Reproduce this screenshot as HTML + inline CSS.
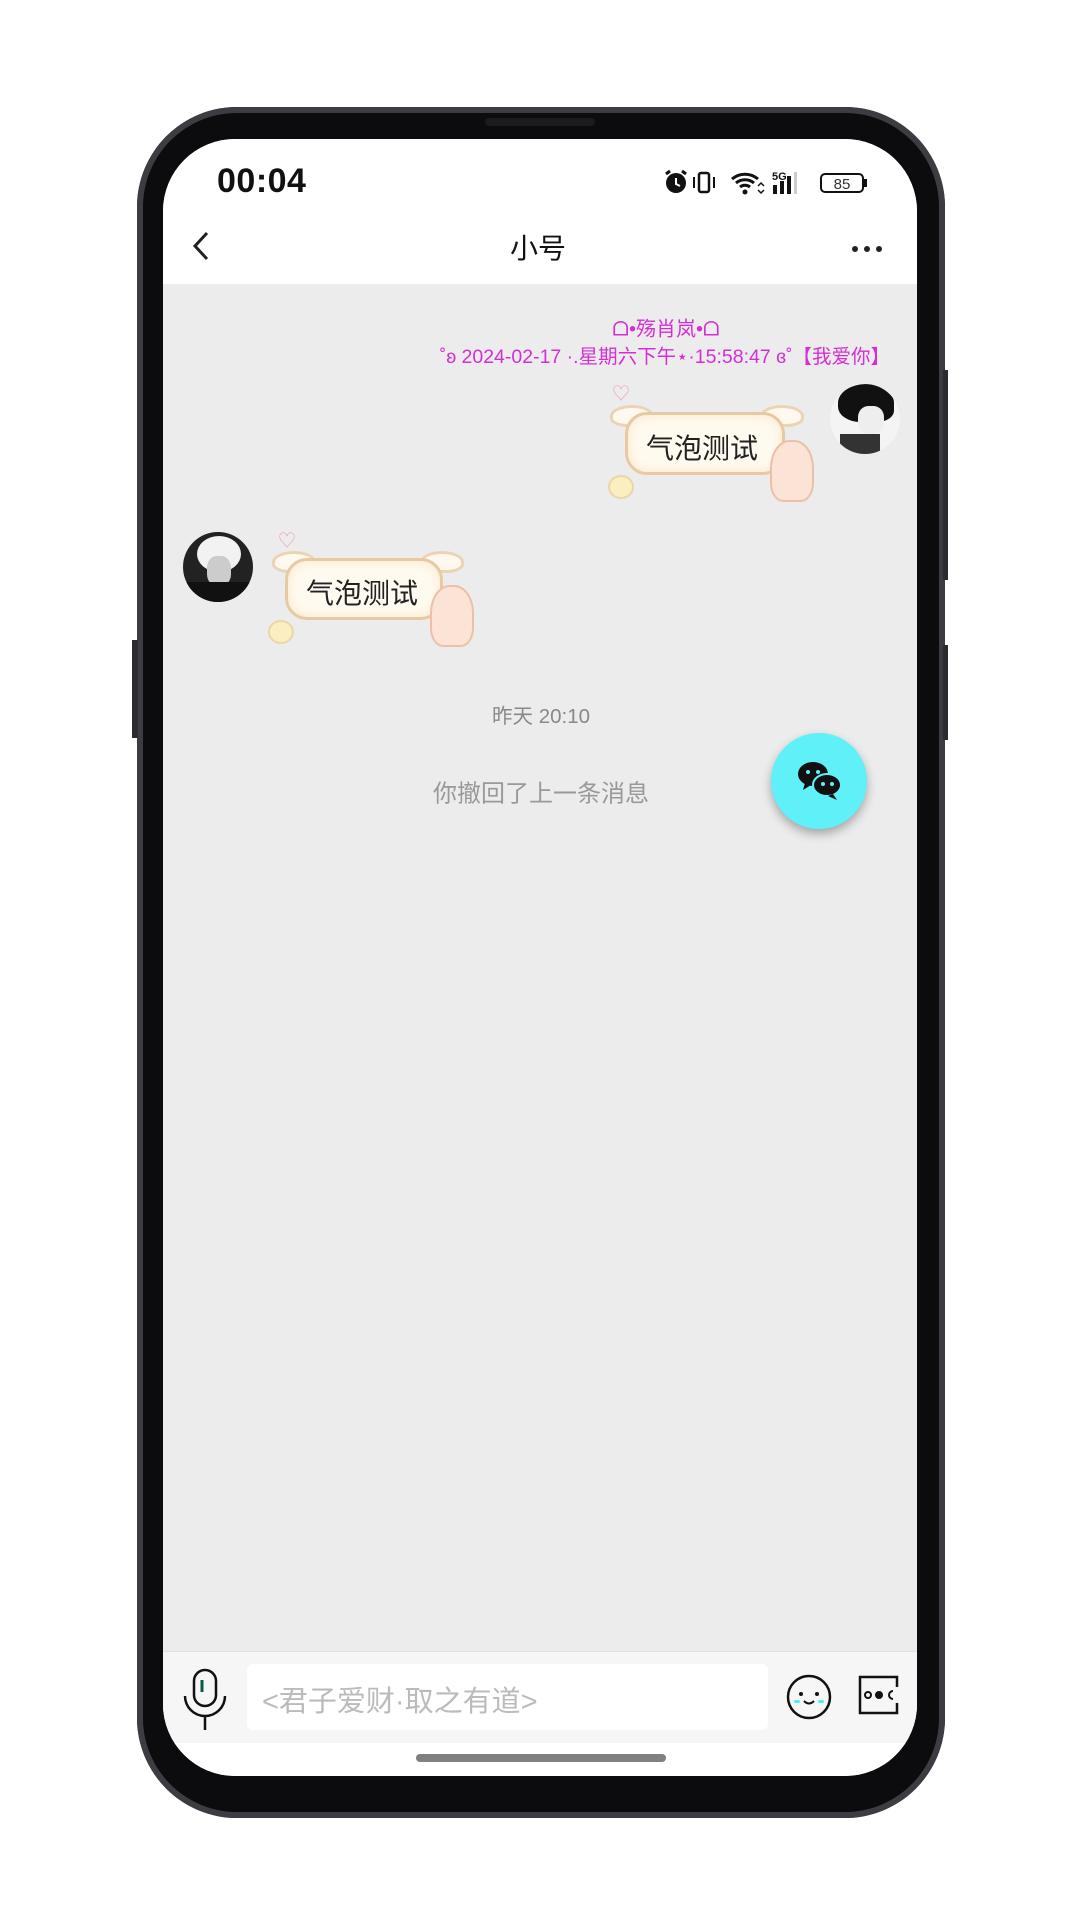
<!DOCTYPE html>
<html><head><meta charset="utf-8">
<style>
*{margin:0;padding:0;box-sizing:border-box}
body{width:1080px;height:1918px;background:#fff;position:relative;overflow:hidden;font-family:"Liberation Sans","Noto Sans CJK SC",sans-serif}
.abs{position:absolute}
.phone{left:137px;top:107px;width:808px;height:1711px;background:#0c0c0e;border-radius:100px;box-shadow:inset 0 0 0 6px #3c3c42}
.screen{left:163px;top:139px;width:754px;height:1637px;background:#ececec;border-radius:72px;overflow:hidden}
.c{transform:translate(-50%,-50%);white-space:nowrap}
.bub{background:#fffaf0;border:3px solid #e8c9a4;border-radius:22px;box-shadow:inset 0 0 12px #f8e6c8}
.wing{width:44px;height:22px;border:3px solid #ecd3b4;border-radius:50% 50% 40% 40%;background:#fff8ee}
.av{border-radius:50%;overflow:hidden}
</style></head><body>
<div class="abs phone"></div>
<div class="abs" style="left:485px;top:118px;width:110px;height:8px;background:#1c1c20;border-radius:4px"></div>
<div class="abs" style="left:943px;top:370px;width:5px;height:210px;background:#2b2b30"></div>
<div class="abs" style="left:943px;top:645px;width:5px;height:95px;background:#2b2b30"></div>
<div class="abs" style="left:132px;top:640px;width:6px;height:98px;background:#2b2b30"></div>
<div class="abs screen">
  <div class="abs" style="left:0;top:0;width:754px;height:145px;background:#fff"></div>
  <div class="abs" style="left:0;top:1512px;width:754px;height:125px;background:#fff"></div>
  <div class="abs" style="left:0;top:1512px;width:754px;height:92px;background:#f6f6f6;border-top:1px solid #e2e2e2"></div>
</div>
<div class="abs" style="left:217px;top:162px;font-size:34px;color:#111;font-weight:bold;letter-spacing:0.5px">00:04</div>
<svg class="abs" style="left:660px;top:168px" width="215" height="30" viewBox="0 0 215 30">
  <circle cx="16" cy="15" r="10" fill="#111"/><path d="M6 6l4-3M26 6l-4-3" stroke="#111" stroke-width="3"/><path d="M16 10v6l4 2" stroke="#fff" stroke-width="2" fill="none"/>
  <rect x="39" y="5" width="10" height="19" rx="2" fill="none" stroke="#111" stroke-width="2.5"/><path d="M34 9v11M54 9v11" stroke="#111" stroke-width="2"/>
  <path d="M72 11a20 20 0 0 1 26 0M76 15a14 14 0 0 1 18 0M80 19a8 8 0 0 1 10 0" stroke="#111" stroke-width="3" fill="none"/><circle cx="85" cy="24" r="2.5" fill="#111"/><path d="M98 18l3-3 3 3M98 22l3 3 3-3" stroke="#111" stroke-width="1.5" fill="none"/>
  <text x="112" y="12" font-size="11" font-weight="bold" fill="#111" font-family="Liberation Sans">5G</text>
  <rect x="113" y="17" width="4" height="9" fill="#111"/><rect x="120" y="13" width="4" height="13" fill="#111"/><rect x="127" y="8" width="4" height="18" fill="#111"/><rect x="134" y="4" width="3" height="22" fill="#ccc"/>
  <rect x="161" y="6" width="42" height="18" rx="4" fill="none" stroke="#111" stroke-width="2"/><rect x="204" y="11" width="3" height="8" fill="#111"/>
  <text x="182" y="21" font-size="15" fill="#333" text-anchor="middle" font-family="Liberation Sans">85</text>
</svg>
<svg class="abs" style="left:190px;top:230px" width="22" height="32"><path d="M17 3L5 16l12 13" stroke="#222" stroke-width="3" fill="none"/></svg>
<div class="abs c" style="left:538px;top:247px;font-size:28px;color:#111">小号</div>
<div class="abs" style="left:852px;top:246px;width:6px;height:6px;border-radius:50%;background:#222;box-shadow:12px 0 #222,24px 0 #222"></div>
<div class="abs c" style="left:666px;top:327px;font-size:20px;color:#d62ed6">ᗝ•殇肖岚•ᗝ</div>
<div class="abs" style="right:190px;top:340px;font-size:19.5px;color:#d62ed6;white-space:nowrap">˚ʚ 2024-02-17 ·.星期六下午⋆·15:58:47 ɞ˚【我爱你】</div>
<div class="abs" style="left:612px;top:380px;color:#f3a0c4;font-size:18px">♡</div>
<div class="abs wing" style="left:610px;top:405px"></div><div class="abs wing" style="left:760px;top:405px"></div>
<div class="abs bub" style="left:625px;top:412px;width:160px;height:63px"></div>
<div class="abs c" style="left:702px;top:447px;font-size:28px;color:#222">气泡测试</div>
<div class="abs" style="left:608px;top:475px;width:26px;height:24px;border-radius:50%;background:#fbeec0;border:2px solid #e9d7a8"></div>
<div class="abs" style="left:770px;top:440px;width:44px;height:62px;border-radius:45% 45% 30% 30%;background:#fbe3d5;border:2px solid #ecc0a8"></div>
<div class="abs av" style="left:830px;top:384px;width:70px;height:70px;background:#f4f4f4">
  <div class="abs" style="left:8px;top:0;width:56px;height:38px;background:#111;border-radius:50% 50% 30% 40%"></div>
  <div class="abs" style="left:28px;top:22px;width:26px;height:28px;background:#eee;border-radius:40%"></div>
  <div class="abs" style="left:10px;top:50px;width:40px;height:22px;background:#333"></div>
</div>
<div class="abs" style="left:278px;top:527px;color:#f3a0c4;font-size:18px">♡</div>
<div class="abs wing" style="left:272px;top:551px"></div><div class="abs wing" style="left:420px;top:551px"></div>
<div class="abs bub" style="left:285px;top:558px;width:158px;height:62px"></div>
<div class="abs c" style="left:362px;top:592px;font-size:28px;color:#222">气泡测试</div>
<div class="abs" style="left:268px;top:620px;width:26px;height:24px;border-radius:50%;background:#fbeec0;border:2px solid #e9d7a8"></div>
<div class="abs" style="left:430px;top:585px;width:44px;height:62px;border-radius:45% 45% 30% 30%;background:#fbe3d5;border:2px solid #ecc0a8"></div>
<div class="abs av" style="left:183px;top:532px;width:70px;height:70px;background:#222">
  <div class="abs" style="left:14px;top:4px;width:44px;height:36px;background:#f2f2f2;border-radius:50%"></div>
  <div class="abs" style="left:24px;top:24px;width:24px;height:30px;background:#ccc;border-radius:40%"></div>
  <div class="abs" style="left:0;top:50px;width:70px;height:20px;background:#111"></div>
</div>
<div class="abs c" style="left:541px;top:714px;font-size:20.5px;color:#888">昨天 20:10</div>
<div class="abs c" style="left:541px;top:791px;font-size:24px;color:#999">你撤回了上一条消息</div>
<div class="abs" style="left:771px;top:733px;width:96px;height:96px;border-radius:50%;background:#5ff0f8;box-shadow:0 5px 10px rgba(0,0,0,0.3)"></div>
<svg class="abs" style="left:797px;top:761px" width="46" height="40" viewBox="0 0 46 40">
  <ellipse cx="16" cy="13" rx="15" ry="12" fill="#111"/><path d="M8 22l-2 7 8-5z" fill="#111"/>
  <ellipse cx="30" cy="24" rx="14" ry="11" fill="#111" stroke="#5ff0f8" stroke-width="2"/><path d="M36 33l4 6-9-4z" fill="#111"/>
  <circle cx="11" cy="11" r="2" fill="#5ff0f8"/><circle cx="21" cy="11" r="2" fill="#5ff0f8"/><circle cx="26" cy="23" r="2" fill="#5ff0f8"/><circle cx="35" cy="23" r="2" fill="#5ff0f8"/>
</svg>
<svg class="abs" style="left:182px;top:1668px" width="46" height="64" viewBox="0 0 46 64">
  <rect x="12" y="2" width="22" height="36" rx="11" fill="none" stroke="#111" stroke-width="2.5"/><path d="M20 12v12" stroke="#0a5a4a" stroke-width="3"/>
  <path d="M3 28a20 20 0 0 0 40 0M23 48v14" stroke="#111" stroke-width="2.5" fill="none"/>
</svg>
<div class="abs" style="left:247px;top:1664px;width:521px;height:66px;background:#fff;border-radius:6px"></div>
<div class="abs" style="left:262px;top:1678px;font-size:29px;color:#bbb;white-space:nowrap">&lt;君子爱财·取之有道&gt;</div>
<svg class="abs" style="left:784px;top:1672px" width="50" height="50" viewBox="0 0 50 50">
  <circle cx="25" cy="25" r="21" fill="none" stroke="#111" stroke-width="2.5"/><circle cx="17" cy="22" r="2" fill="#111"/><circle cx="33" cy="22" r="2" fill="#111"/>
  <path d="M20 29q5 5 10 0" stroke="#111" stroke-width="2" fill="none"/><rect x="10" y="28" width="6" height="3" rx="1.5" fill="#5ee"/><rect x="34" y="28" width="6" height="3" rx="1.5" fill="#5ee"/>
</svg>
<svg class="abs" style="left:857px;top:1673px" width="44" height="44" viewBox="0 0 44 44">
  <path d="M40 14V4H3v36h37V30" stroke="#111" stroke-width="2.5" fill="none"/><circle cx="11" cy="22" r="3" fill="none" stroke="#111" stroke-width="2"/><circle cx="22" cy="22" r="4" fill="#111"/><path d="M36 18a4 4 0 1 0 0 8" stroke="#111" stroke-width="2" fill="none"/>
</svg>
<div class="abs" style="left:416px;top:1754px;width:250px;height:8px;border-radius:4px;background:#808080"></div>
</body></html>
